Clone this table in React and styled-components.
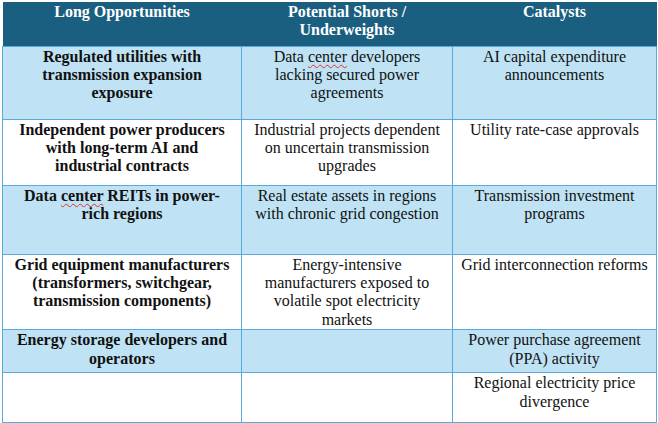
import styled, { createGlobalStyle } from 'styled-components';

const GlobalStyle = createGlobalStyle`
  html, body {
    margin: 0;
    padding: 0;
    background: #ffffff;
    font-family: 'Liberation Serif', serif;
  }
  table, th, td {
    font-family: 'Liberation Serif', serif;
  }
`;

const Page = styled.div`
  padding: 2px 0 0 2px;
  font-family: 'Liberation Serif', serif;
`;

const Table = styled.table`
  width: 654px;
  table-layout: fixed;
  border-collapse: collapse;
  font-family: 'Liberation Serif', serif;
  font-size: 16px;
  line-height: 18.4px;
  color: #111111;
`;

const HeadCell = styled.th`
  background-color: #1a5e80;
  color: #ffffff;
  font-family: 'Liberation Serif', serif;
  font-size: 16px;
  line-height: 18.4px;
  font-weight: 700;
  text-align: center;
  vertical-align: top;
  padding: 1px 8px 0;
  height: 44px;
  box-sizing: border-box;
`;

const Row = styled.tr`
  height: ${({ $h }) => $h}px;
  background-color: ${({ $shaded }) => ($shaded ? '#bfe3f4' : '#ffffff')};
`;

const Cell = styled.td`
  border: 1px solid #5aa9dd;
  padding: 1px 8px 0;
  font-family: 'Liberation Serif', serif;
  font-size: 16px;
  line-height: 18.4px;
  text-align: center;
  vertical-align: top;
  font-weight: ${({ $bold }) => ($bold ? 700 : 400)};
`;

const Misspelled = styled.span`
  text-decoration: underline wavy #e03030;
  text-decoration-thickness: 1px;
  text-underline-offset: 2px;
  text-decoration-skip-ink: none;
`;

const rows = [
  {
    h: 73,
    shaded: true,
    long: 'Regulated utilities with transmission expansion exposure',
    shorts: (
      <>
        Data <Misspelled>center</Misspelled> developers lacking secured power agreements
      </>
    ),
    catalyst: 'AI capital expenditure announcements',
  },
  {
    h: 66,
    long: 'Independent power producers with long-term AI and industrial contracts',
    shorts: 'Industrial projects dependent on uncertain transmission upgrades',
    catalyst: 'Utility rate-case approvals',
  },
  {
    h: 69,
    shaded: true,
    long: (
      <>
        Data <Misspelled>center</Misspelled> REITs in power-rich regions
      </>
    ),
    shorts: 'Real estate assets in regions with chronic grid congestion',
    catalyst: 'Transmission investment programs',
  },
  {
    h: 75,
    long: 'Grid equipment manufacturers (transformers, switchgear, transmission components)',
    shorts: 'Energy-intensive manufacturers exposed to volatile spot electricity markets',
    catalyst: 'Grid interconnection reforms',
  },
  {
    h: 43,
    shaded: true,
    long: 'Energy storage developers and operators',
    shorts: '',
    catalyst: 'Power purchase agreement (PPA) activity',
  },
  {
    h: 50,
    long: '',
    shorts: '',
    catalyst: 'Regional electricity price divergence',
  },
];

export default function App() {
  return (
    <>
      <GlobalStyle />
      <Page>
        <Table>
          <colgroup>
            <col style={{ width: 239 }} />
            <col style={{ width: 211 }} />
            <col style={{ width: 204 }} />
          </colgroup>
          <thead>
            <tr>
              <HeadCell>Long Opportunities</HeadCell>
              <HeadCell>Potential Shorts / Underweights</HeadCell>
              <HeadCell>Catalysts</HeadCell>
            </tr>
          </thead>
          <tbody>
            {rows.map((row, i) => (
              <Row key={i} $h={row.h} $shaded={row.shaded}>
                <Cell $bold>{row.long}</Cell>
                <Cell>{row.shorts}</Cell>
                <Cell>{row.catalyst}</Cell>
              </Row>
            ))}
          </tbody>
        </Table>
      </Page>
    </>
  );
}
